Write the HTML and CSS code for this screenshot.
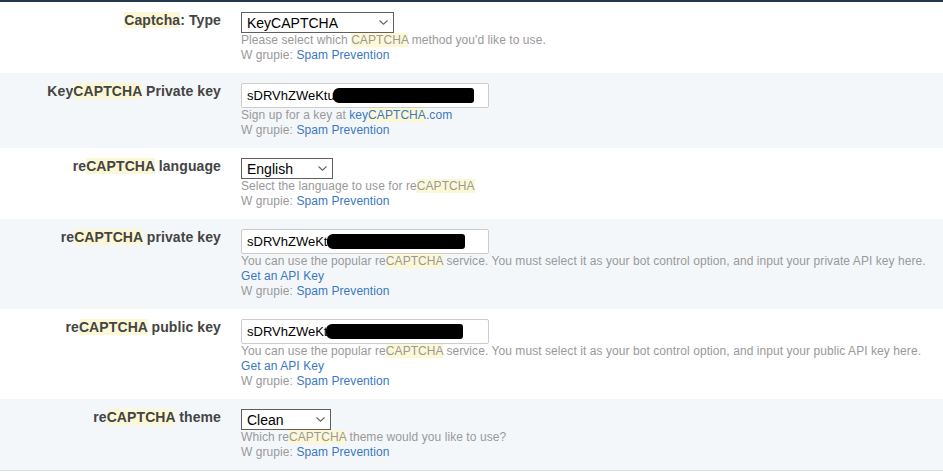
FILE: index.html
```html
<!DOCTYPE html>
<html lang="pl">
<head>
    <meta charset="UTF-8">
    <title>Spam Prevention</title>
    <link rel="stylesheet" href="styles.css">
</head>
<body>

    <div class="settings">
        <!-- Captcha type -->
        <div class="row">
            <div class="label"><span class="hl">Captcha</span>: Type</div>
            <div class="field">
                <select class="sel sel-type">
                    <option>KeyCAPTCHA</option>
                </select>
                <p class="desc">Please select which <span class="hl">CAPTCHA</span> method you'd like to use.</p>
                <p class="desc">W grupie: <a href="#">Spam Prevention</a></p>
            </div>
        </div>

        <div class="row alt">
            <div class="label">Key<span class="hl">CAPTCHA</span> Private key</div>
            <div class="field">
                <div class="key-wrap">
                    <input type="text" class="txt" value="sDRVhZWeKtu">
                    <span class="redact r1"></span>
                </div>
                <p class="desc">Sign up for a key at <a href="#">key<span class="hl">CAPTCHA</span>.com</a></p>
                <p class="desc">W grupie: <a href="#">Spam Prevention</a></p>
            </div>
        </div>

        <div class="row">
            <div class="label">re<span class="hl">CAPTCHA</span> language</div>
            <div class="field">
                <select class="sel sel-lang">
                    <option>English</option>
                </select>
                <p class="desc">Select the language to use for re<span class="hl">CAPTCHA</span></p>
                <p class="desc">W grupie: <a href="#">Spam Prevention</a></p>
            </div>
        </div>

        <div class="row alt">
            <div class="label">re<span class="hl">CAPTCHA</span> private key</div>
            <div class="field">
                <div class="key-wrap">
                    <input type="text" class="txt" value="sDRVhZWeKt">
                    <span class="redact r2"></span>
                </div>
                <p class="desc">You can use the popular re<span class="hl">CAPTCHA</span> service. You must select it as your bot control option, and input your private API key here.</p>
                <p class="desc"><a href="#">Get an API Key</a></p>
                <p class="desc">W grupie: <a href="#">Spam Prevention</a></p>
            </div>
        </div>

        <div class="row">
            <div class="label">re<span class="hl">CAPTCHA</span> public key</div>
            <div class="field">
                <div class="key-wrap">
                    <input type="text" class="txt" value="sDRVhZWeKt">
                    <span class="redact r3"></span>
                </div>
                <p class="desc">You can use the popular re<span class="hl">CAPTCHA</span> service. You must select it as your bot control option, and input your public API key here.</p>
                <p class="desc"><a href="#">Get an API Key</a></p>
                <p class="desc">W grupie: <a href="#">Spam Prevention</a></p>
            </div>
        </div>

        <div class="row alt last">
            <div class="label">re<span class="hl">CAPTCHA</span> theme</div>
            <div class="field">
                <select class="sel sel-theme">
                    <option>Clean</option>
                </select>
                <p class="desc">Which re<span class="hl">CAPTCHA</span> theme would you like to use?</p>
                <p class="desc">W grupie: <a href="#">Spam Prevention</a></p>
            </div>
        </div>
    </div>

</body>
</html>
```

FILE: styles.css
```css
/* Reset */
* {
    margin: 0;
    padding: 0;
    box-sizing: border-box;
}

body {
    font-family: "Liberation Sans", Arial, sans-serif;
    background-color: #fff;
    color: #444;
}

/* Settings list */
.settings {
    border-top: 2px solid #24384e;
}

.row {
    display: flex;
    gap: 20px;
    padding: 10px 0;
    background-color: #fff;
}

.row.alt {
    background-color: #f4f7fa;
}

.row.last {
    border-bottom: 1px solid #dcdfe3;
}

.label {
    width: 221px;
    flex-shrink: 0;
    text-align: right;
    font-size: 14px;
    font-weight: bold;
    color: #444;
    line-height: 17px;
    letter-spacing: 0.1px;
}

.field {
    flex: 1;
}

/* Search highlight */
.hl {
    background-color: #fcf8d6;
}

/* Inputs */
.sel {
    display: block;
    height: 21px;
    font-family: "Liberation Sans", Arial, sans-serif;
    font-size: 14px;
    color: #000;
    border: 1px solid #5f5f5f;
    border-radius: 0;
    padding-left: 5px;
    appearance: none;
    -webkit-appearance: none;
    background: #fff url("data:image/svg+xml,%3Csvg xmlns='http://www.w3.org/2000/svg' width='9' height='5' viewBox='0 0 9 5'%3E%3Cpath d='M0.5 0.5 L4.5 4.2 L8.5 0.5' fill='none' stroke='%23666' stroke-width='1.1'/%3E%3C/svg%3E") no-repeat right 5px center;
}

.sel-type {
    width: 153px;
}

.sel-lang {
    width: 92px;
}

.sel-theme {
    width: 90px;
}

.key-wrap {
    position: relative;
    width: 248px;
}

.txt {
    display: block;
    width: 248px;
    height: 25px;
    padding: 0 5px;
    font-family: "Liberation Sans", Arial, sans-serif;
    font-size: 13px;
    color: #000;
    background-color: #fff;
    border: 1px solid #ccc;
    border-radius: 2px;
}

/* Blacked-out part of the keys */
.redact {
    position: absolute;
    top: 5px;
    height: 15px;
    background-color: #000;
    border-radius: 6px 3px 3px 6px;
}

.r1 {
    left: 92px;
    width: 141px;
}

.r2 {
    left: 86px;
    width: 138px;
}

.r3 {
    left: 85px;
    width: 137px;
}

/* Descriptions */
.desc {
    font-size: 12px;
    line-height: 15px;
    color: #999;
    letter-spacing: 0.07px;
}

.desc a {
    color: #3a78c3;
    text-decoration: none;
}
```
